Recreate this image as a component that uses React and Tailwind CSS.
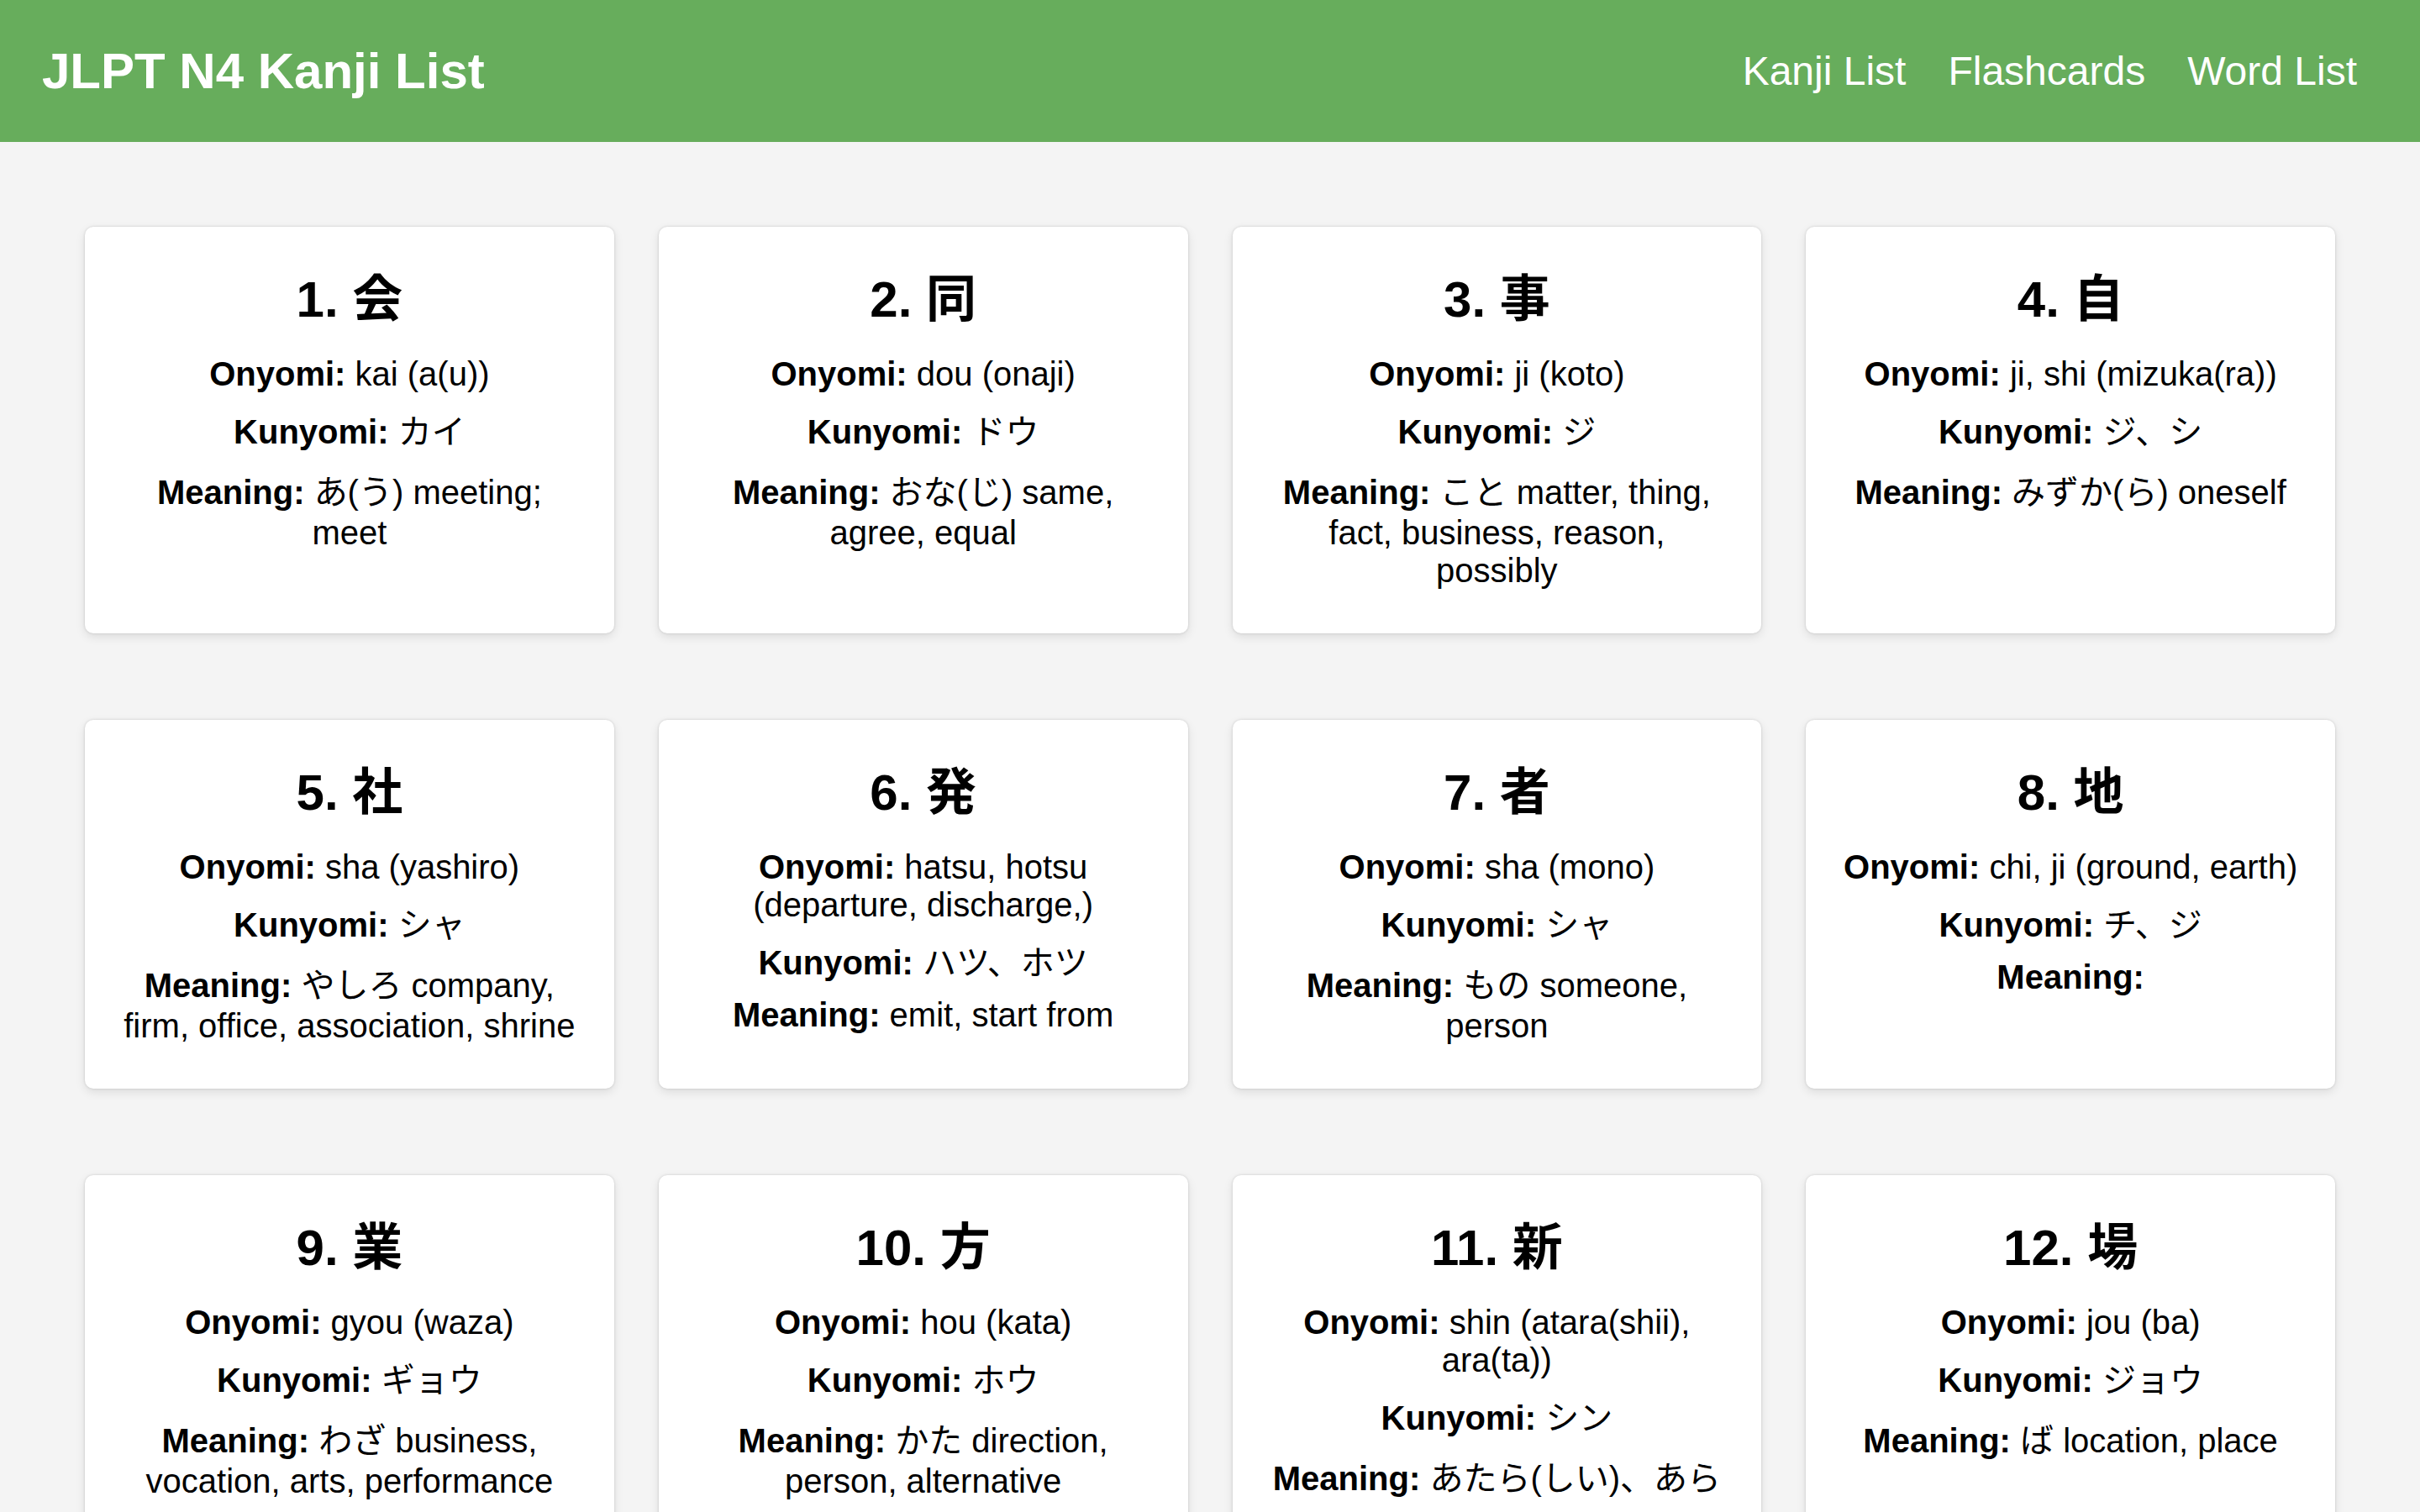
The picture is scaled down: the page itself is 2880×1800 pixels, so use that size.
import React from 'react';

const kanjiList = [
  { id: 1, kanji: '会', onyomi: 'kai (a(u))', kunyomi: 'カイ', kana: 'あ(う)', meaning: 'meeting; meet' },
  { id: 2, kanji: '同', onyomi: 'dou (onaji)', kunyomi: 'ドウ', kana: 'おな(じ)', meaning: 'same, agree, equal' },
  { id: 3, kanji: '事', onyomi: 'ji (koto)', kunyomi: 'ジ', kana: 'こと', meaning: 'matter, thing, fact, business, reason, possibly' },
  { id: 4, kanji: '自', onyomi: 'ji, shi (mizuka(ra))', kunyomi: 'ジ、シ', kana: 'みずか(ら)', meaning: 'oneself' },
  { id: 5, kanji: '社', onyomi: 'sha (yashiro)', kunyomi: 'シャ', kana: 'やしろ', meaning: 'company, firm, office, association, shrine' },
  { id: 6, kanji: '発', onyomi: 'hatsu, hotsu (departure, discharge,)', kunyomi: 'ハツ、ホツ', kana: '', meaning: 'emit, start from' },
  { id: 7, kanji: '者', onyomi: 'sha (mono)', kunyomi: 'シャ', kana: 'もの', meaning: 'someone, person' },
  { id: 8, kanji: '地', onyomi: 'chi, ji (ground, earth)', kunyomi: 'チ、ジ', kana: '', meaning: '' },
  { id: 9, kanji: '業', onyomi: 'gyou (waza)', kunyomi: 'ギョウ', kana: 'わざ', meaning: 'business, vocation, arts, performance' },
  { id: 10, kanji: '方', onyomi: 'hou (kata)', kunyomi: 'ホウ', kana: 'かた', meaning: 'direction, person, alternative' },
  { id: 11, kanji: '新', onyomi: 'shin (atara(shii), ara(ta))', kunyomi: 'シン', kana: 'あたら(しい)、あら(た)', meaning: 'new' },
  { id: 12, kanji: '場', onyomi: 'jou (ba)', kunyomi: 'ジョウ', kana: 'ば', meaning: 'location, place' },
];

const KanjiCard = ({ item }) => {
  const meaning = [item.kana, item.meaning].filter(Boolean).join(' ');
  return (
    <div className="bg-white rounded-[10px] shadow-[0_4px_12px_rgba(0,0,0,0.1),0_0_3px_rgba(0,0,0,0.15)] px-[40px] pt-[37px] pb-[52px] text-center text-black">
      <h2 className="text-[60px] font-bold">
        {item.id}. {item.kanji}
      </h2>
      <div className="mt-[29px] flex flex-col gap-[14px] text-[40px]">
        <p>
          <strong className="font-bold">Onyomi:</strong> {item.onyomi}
        </p>
        <p>
          <strong className="font-bold">Kunyomi:</strong> {item.kunyomi}
        </p>
        <p>
          <strong className="font-bold">Meaning:</strong> {meaning}
        </p>
      </div>
    </div>
  );
};

const App = () => {
  return (
    <div className="min-h-screen bg-[#f4f4f4] font-['Liberation_Sans','Noto_Sans_CJK_JP',sans-serif] leading-[normal]">
      <header className="h-[169px] bg-[#67ad5c] px-[50px] flex items-center justify-between text-white">
        <h1 className="text-[60px] font-bold">JLPT N4 Kanji List</h1>
        <nav className="flex items-center gap-[50px] pr-[25px] text-[48px]">
          <a href="#">Kanji List</a>
          <a href="#">Flashcards</a>
          <a href="#">Word List</a>
        </nav>
      </header>

      <main className="grid grid-cols-4 gap-x-[53px] gap-y-[103px] px-[101px] pt-[101px] pb-[100px]">
        {kanjiList.map((item) => (
          <KanjiCard key={item.id} item={item} />
        ))}
      </main>
    </div>
  );
};

export default App;
